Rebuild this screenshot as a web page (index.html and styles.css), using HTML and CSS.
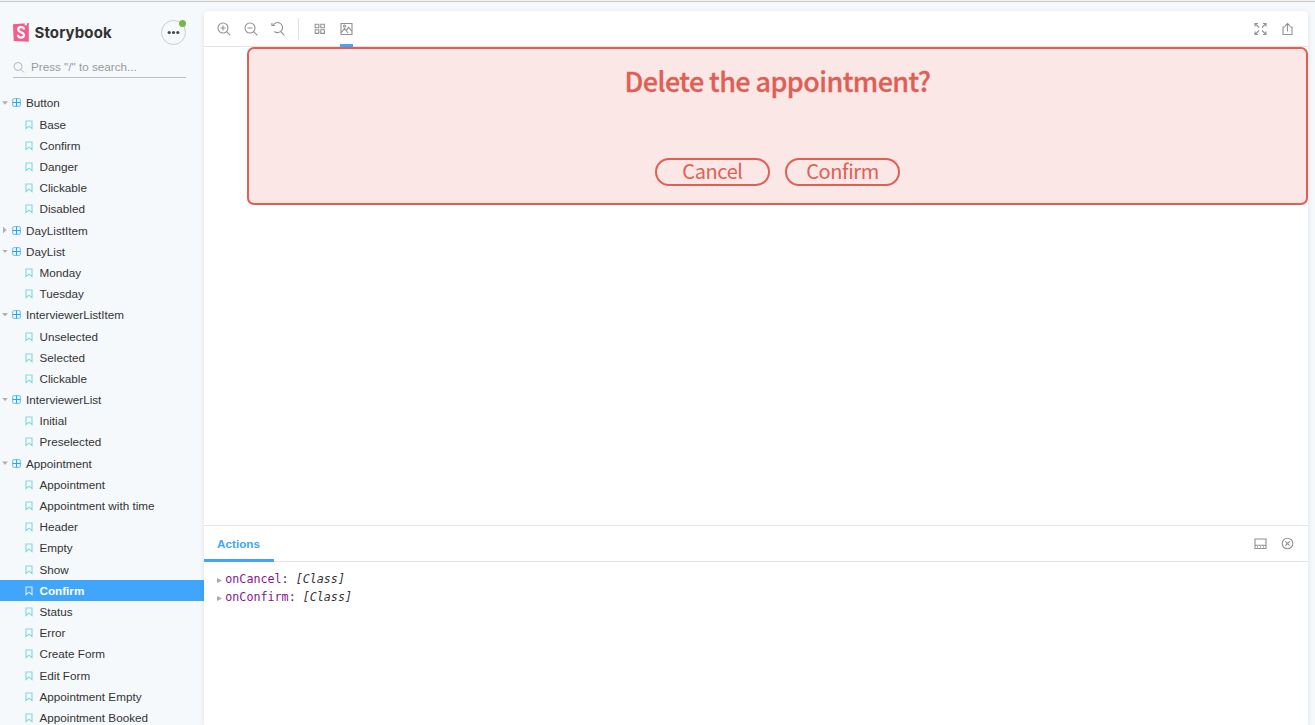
FILE: index.html
```
<!DOCTYPE html>
<html lang="en">
<head>
<meta charset="utf-8">
<title>Appointment / Confirm - Storybook</title>
<link rel="stylesheet" href="styles.css">
</head>
<body>
<svg class="defs" width="0" height="0">
  <symbol id="component" viewBox="0 0 9 9"><rect x=".7" y=".7" width="7.600" height="7.600" rx="1" fill="none" stroke="currentColor" stroke-opacity=".7"/><path d="M4.500 .5v8M.5 4.500h8" stroke="currentColor" stroke-width="1"/></symbol>
  <symbol id="bookmark" viewBox="0 0 8 10"><path d="M1 1h6v7.700L4 6.200 1 8.700z" fill="none" stroke="currentColor" stroke-width="1.100"/></symbol>
</svg>
<div class="app">
  <aside class="sidebar">
    <header class="brand">
      <svg class="logo" width="16" height="19" viewBox="0 0 16 19"><path d="M0 1.200L15.800 0v18.800L.7 18.100z" fill="#f55c89"/><path d="M11.600 0h2.300l.1 2.700-1.100-.8-1.200.7z" fill="#fff"/><path d="M11 6.600C11 4.800 10 4.200 8.200 4.200 6.300 4.200 5.200 5.100 5.200 6.500c0 3.100 5.800 2.300 5.800 5.600 0 1.600-1 2.600-2.900 2.600-2 0-3.100-.9-3.100-3" fill="none" stroke="#fff" stroke-width="2.200"/></svg>
      <span class="wordmark">Storybook</span>
      <button class="more"><svg width="13" height="5" viewBox="0 0 13 5"><g fill="#454a50"><circle cx="2.200" cy="2.500" r="1.600"/><circle cx="6.500" cy="2.500" r="1.600"/><circle cx="10.800" cy="2.500" r="1.600"/></g></svg><i class="dot"></i></button>
    </header>
    <div class="search"><svg width="12" height="12" viewBox="0 0 12 12" fill="none" stroke="#b4b7ba"><circle cx="5" cy="5.500" r="4"/><path d="M8 8.500l3 3"/></svg><span>Press "/" to search...</span></div>
    <nav class="tree">
      <a class="group"><i class="arrow"></i><svg><use href="#component"/></svg>Button</a>
      <a class="story"><svg><use href="#bookmark"/></svg>Base</a>
      <a class="story"><svg><use href="#bookmark"/></svg>Confirm</a>
      <a class="story"><svg><use href="#bookmark"/></svg>Danger</a>
      <a class="story"><svg><use href="#bookmark"/></svg>Clickable</a>
      <a class="story"><svg><use href="#bookmark"/></svg>Disabled</a>
      <a class="group closed"><i class="arrow"></i><svg><use href="#component"/></svg>DayListItem</a>
      <a class="group"><i class="arrow"></i><svg><use href="#component"/></svg>DayList</a>
      <a class="story"><svg><use href="#bookmark"/></svg>Monday</a>
      <a class="story"><svg><use href="#bookmark"/></svg>Tuesday</a>
      <a class="group"><i class="arrow"></i><svg><use href="#component"/></svg>InterviewerListItem</a>
      <a class="story"><svg><use href="#bookmark"/></svg>Unselected</a>
      <a class="story"><svg><use href="#bookmark"/></svg>Selected</a>
      <a class="story"><svg><use href="#bookmark"/></svg>Clickable</a>
      <a class="group"><i class="arrow"></i><svg><use href="#component"/></svg>InterviewerList</a>
      <a class="story"><svg><use href="#bookmark"/></svg>Initial</a>
      <a class="story"><svg><use href="#bookmark"/></svg>Preselected</a>
      <a class="group"><i class="arrow"></i><svg><use href="#component"/></svg>Appointment</a>
      <a class="story"><svg><use href="#bookmark"/></svg>Appointment</a>
      <a class="story"><svg><use href="#bookmark"/></svg>Appointment with time</a>
      <a class="story"><svg><use href="#bookmark"/></svg>Header</a>
      <a class="story"><svg><use href="#bookmark"/></svg>Empty</a>
      <a class="story"><svg><use href="#bookmark"/></svg>Show</a>
      <a class="story selected"><svg><use href="#bookmark"/></svg>Confirm</a>
      <a class="story"><svg><use href="#bookmark"/></svg>Status</a>
      <a class="story"><svg><use href="#bookmark"/></svg>Error</a>
      <a class="story"><svg><use href="#bookmark"/></svg>Create Form</a>
      <a class="story"><svg><use href="#bookmark"/></svg>Edit Form</a>
      <a class="story"><svg><use href="#bookmark"/></svg>Appointment Empty</a>
      <a class="story"><svg><use href="#bookmark"/></svg>Appointment Booked</a>
    </nav>
  </aside>
  <main class="main">
    <div class="toolbar">
      <svg class="icon" viewBox="0 0 14 14"><circle cx="6" cy="6" r="5"/><path d="M9.600 9.600l3.700 3.700M3.500 6h5M6 3.500v5"/></svg>
      <svg class="icon" viewBox="0 0 14 14"><circle cx="6" cy="6" r="5"/><path d="M9.600 9.600l3.700 3.700M3.500 6h5"/></svg>
      <svg class="icon" viewBox="0 0 14 14"><path d="M2.200 3A5 5 0 1 1 3.400 9.500M9.900 9.600l3.400 3.700M.9 1v2.500h3"/></svg>
      <span class="divider"></span>
      <svg class="icon" viewBox="0 0 14 14"><path d="M2.200 2.200h3.600v3.600H2.200zM7.800 2.200h3.600v3.600H7.800zM2.200 7.800h3.600v3.600H2.200zM7.800 7.800h3.600v3.600H7.800z"/></svg>
      <span class="tool active"><svg class="icon" viewBox="0 0 14 14"><path d="M1 1.500h11v11H1zM1.500 10.500l3-4 3.500 4.500M6.500 8.200l2-3 3.500 4.300"/><circle cx="4.500" cy="4" r="1"/></svg></span>
      <span class="spacer"></span>
      <svg class="icon" viewBox="0 0 14 14"><path d="M2 4.500v-3h3M2 1.500l4 4M10 1.500h3v3M13 1.500l-4 4M2 9.500v3h3M2 12.500l4-4M13 9.500v3h-3M13 12.500l-4-4"/></svg>
      <svg class="icon" viewBox="0 0 14 14"><path d="M5 5H3v7.500h9V5h-2M7.500 9.500v-8M5 4l2.500-2.500L10 4"/></svg>
    </div>
    <section class="canvas">
      <article class="confirm">
        <h1>Delete the appointment?</h1>
        <div class="buttons"><button>Cancel</button><button>Confirm</button></div>
      </article>
    </section>
    <section class="panel">
      <div class="tabs">
        <span class="tab">Actions</span>
        <span class="spacer"></span>
        <svg class="icon" viewBox="0 0 14 14"><path d="M2 2h11v9.500H2zM2 8.200h11M4 9.900h1M7 9.900h1M10 9.900h1"/></svg>
        <svg class="icon" viewBox="0 0 14 14"><circle cx="7.500" cy="6.500" r="5.300"/><path d="M5.300 4.300l4.400 4.400M9.700 4.300L5.300 8.700"/></svg>
      </div>
      <div class="log">
        <div class="entry"><i class="expand"></i><span class="key">onCancel</span>: <em>[Class]</em></div>
        <div class="entry"><i class="expand"></i><span class="key">onConfirm</span>: <em>[Class]</em></div>
      </div>
    </section>
  </main>
</div>
</body>
</html>
```
FILE: styles.css
```
* { box-sizing: border-box; }
body {
  margin: 0;
  height: 725px;
  overflow: hidden;
  background: #f6f9fc;
  color: #333;
  font: 11.7px "Liberation Sans", Arial, sans-serif;
}
.defs { display: block; }
svg { flex: none; }
.app {
  display: flex;
  height: 725px;
  border-top: 1px solid #f1f1f1;
  box-shadow: inset 0 1px #c9c9c9;
}
.sidebar { width: 204px; flex: none; padding-top: 18px; }
.brand { display: flex; align-items: center; height: 27px; padding: 0 18px 0 13px; }
.logo { display: block; }
.wordmark {
  margin-left: 5.500px;
  width: 80px;
  font: 700 15px/20px Inter, sans-serif;
  letter-spacing: .1px;
  white-space: nowrap;
}
.more {
  position: relative;
  display: flex;
  align-items: center;
  justify-content: center;
  width: 25px;
  height: 25px;
  margin-left: auto;
  padding: 0;
  border: 1px solid #cbced1;
  border-radius: 50%;
  background: none;
}
.dot {
  position: absolute;
  top: -1px;
  right: -1px;
  width: 7px;
  height: 7px;
  border-radius: 50%;
  background: #74b946;
}
.search {
  display: flex;
  align-items: center;
  gap: 6px;
  width: 173px;
  height: 21px;
  margin: 11px 0 0 13px;
  padding-bottom: 1px;
  border-bottom: 1px solid #bdc0c2;
  color: #999;
}
.tree { padding-top: 14.400px; }
.tree a { display: flex; align-items: center; height: 21.200px; white-space: nowrap; }
.group { padding-left: 2px; }
.group svg { width: 9px; height: 9px; margin: 0 5px 0 4px; color: #1ea7fd; }
.arrow { width: 6px; height: 3.500px; background: #b0b0b0; clip-path: polygon(0 0, 100% 0, 50% 100%); }
.closed .arrow { width: 3.500px; height: 7px; margin: 0 1.500px 0 1px; clip-path: polygon(0 0, 100% 50%, 0 100%); }
.story { padding-left: 25.400px; }
.story svg { width: 8px; height: 10px; margin: 1px 6.100px 0 0; color: #7edbd7; }
.tree .selected { background: #3fa6fb; color: #fff; font-weight: bold; }
.selected svg { color: #d8efff; }
.main {
  display: flex;
  flex-direction: column;
  width: 1104px;
  margin-top: 10px;
  border-radius: 4px 4px 0 0;
  background: #fff;
  box-shadow: 0 1px 5px rgba(0, 0, 0, .1);
}
.toolbar {
  display: flex;
  align-items: center;
  height: 36px;
  flex: none;
  gap: 13px;
  padding: 0 14px 0 13px;
  border-bottom: 1px solid #e3e4e5;
}
.icon { display: block; width: 14px; height: 14px; fill: none; stroke: #929292; stroke-width: 1.100; }
.divider { width: 1px; height: 22px; margin-right: 1px; background: #e1e1e1; }
.spacer { flex: 1; }
.tool { display: flex; align-items: center; height: 36px; padding-top: 2px; margin-bottom: -1px; border-bottom: 3px solid #3fa6fb; width: 13px; }
.canvas { height: 478px; flex: none; padding-left: 43px; }
.confirm {
  display: flex;
  flex-direction: column;
  align-items: center;
  height: 158px;
  padding-top: 12px;
  border: 2px solid #e05f55;
  border-radius: 7px;
  background: #fbe7e6;
  color: #e05f55;
  font-family: "Noto Sans CJK SC", sans-serif;
}
.confirm h1 { margin: 0; font-size: 27px; font-weight: 500; letter-spacing: -.6px; line-height: 40px; white-space: nowrap; -webkit-text-stroke: .3px #e05f55; }
.buttons { display: flex; gap: 15px; margin-top: 57px; }
.buttons button {
  width: 115px;
  height: 28px;
  padding: 0 0 2px;
  border: 2px solid #e05f55;
  border-radius: 14px;
  background: none;
  color: inherit;
  font: 20px/22px "Noto Sans CJK SC", sans-serif;
  letter-spacing: -.4px;
}
.panel { flex: 1; border-top: 1px solid #e3e4e5; }
.tabs { display: flex; align-items: center; height: 36px; gap: 13px; padding-right: 14px; border-bottom: 1px solid #e3e4e5; }
.tab {
  align-self: flex-start;
  width: 70px;
  height: 36px;
  padding-right: 1px;
  border-bottom: 3px solid #3fa6fb;
  color: #3fa6fb;
  font-weight: bold;
  line-height: 35px;
  text-align: center;
}
.log { padding: 8px 13px; font: 11.7px/18px "DejaVu Sans Mono", monospace; }
.entry { white-space: pre; }
.expand { display: inline-block; width: 5px; height: 5px; margin-right: 3.300px; background: #aaa; clip-path: polygon(0 0, 100% 50%, 0 100%); }
.key { color: #881391; }
```
